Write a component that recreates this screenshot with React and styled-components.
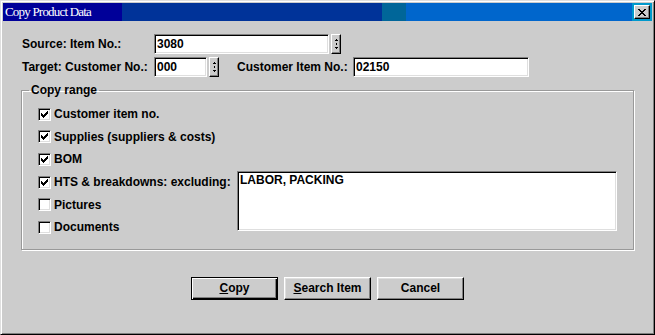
import React from 'react';
import styled, { createGlobalStyle } from 'styled-components';

const GlobalStyle = createGlobalStyle`
    html, body {
        margin: 0;
        padding: 0;
        background: #cccccc;
    }
    body {
        font-family: "Liberation Sans", Arial, sans-serif;
    }
`

const Window = styled.div`
    box-sizing: border-box;
    width: 655px;
    height: 335px;
    display: flex;
    flex-direction: column;
    background: #cccccc;
    border: 1px solid;
    border-color: #dfdfdf #000000 #000000 #dfdfdf;
    box-shadow: inset 1px 1px #ffffff, inset -1px -1px #808080;
    padding: 2px;
`
const TitleBar = styled.div`
    height: 18px;
    flex: none;
    display: flex;
    align-items: center;
    justify-content: space-between;
    padding: 0 2px;
    background: linear-gradient(to right,
        #000099 0 119px,
        #003399 119px 379px,
        #006699 379px 403px,
        #0066cc 403px 629px,
        #0099cc 629px);
`
const Title = styled.span`
    font-family: "Liberation Serif", "Times New Roman", serif;
    font-size: 13px;
    letter-spacing: -0.8px;
    color: #ffffff;
    line-height: 18px;
`
const CloseButton = styled.div`
    box-sizing: border-box;
    width: 16px;
    height: 14px;
    display: flex;
    align-items: center;
    justify-content: center;
    background: #cccccc;
    border: 1px solid;
    border-color: #ffffff #000000 #000000 #ffffff;
    box-shadow: inset -1px -1px #808080;
`
const Body = styled.div`
    flex: 1;
    display: flex;
    flex-direction: column;
    padding: 13px 18px 0 18px;
`
const Fields = styled.div`
    display: flex;
    flex-direction: column;
    gap: 3px;
    padding-left: 1px;
`
const FieldRow = styled.div`
    display: flex;
    align-items: center;
    height: 20px;
`
const FieldLabel = styled.span`
    width: ${p => p.$width}px;
    margin-left: ${p => p.$offset || 0}px;
    flex: none;
    font-size: 12px;
    font-weight: bold;
    white-space: nowrap;
`
const TextInput = styled.input`
    box-sizing: border-box;
    width: ${p => p.$width}px;
    height: 20px;
    margin: 0;
    padding: 0 2px;
    border: 1px solid;
    border-color: #808080 #ffffff #ffffff #808080;
    box-shadow: inset 1px 1px #000000, inset -1px -1px #dfdfdf;
    background: #ffffff;
    font-family: "Liberation Sans", Arial, sans-serif;
    font-size: 12px;
    font-weight: bold;
    color: #000000;
    outline: none;
`
const Spinner = styled.div`
    box-sizing: border-box;
    width: 10px;
    height: 20px;
    margin-left: 2px;
    display: flex;
    align-items: center;
    justify-content: center;
    background: #cccccc;
    border: 1px solid;
    border-color: #ffffff #000000 #000000 #ffffff;
    box-shadow: inset -1px -1px #808080;
`
const GroupBox = styled.fieldset`
    margin: 6px 0 0 0;
    padding: 0;
    min-inline-size: 0;
    border: 1px solid #999999;
    box-shadow: inset 1px 1px #ffffff, 1px 1px #ffffff;
`
const Legend = styled.legend`
    margin-left: 7px;
    padding: 0 2px;
    font-size: 12px;
    font-weight: bold;
    line-height: 14px;
`
const Options = styled.div`
    display: grid;
    grid-template-columns: 199px 380px;
    grid-auto-rows: 22.6px;
    align-items: center;
    padding: 6px 0 10px 16px;
`
const CheckRow = styled.label`
    grid-column: 1;
    display: flex;
    align-items: center;
    gap: 3px;
    font-size: 12px;
    font-weight: bold;
    white-space: nowrap;
`
const CheckBox = styled.span`
    box-sizing: border-box;
    width: 13px;
    height: 13px;
    flex: none;
    display: flex;
    align-items: center;
    justify-content: center;
    background: #ffffff;
    border: 1px solid;
    border-color: #808080 #ffffff #ffffff #808080;
    box-shadow: inset 1px 1px #000000, inset -1px -1px #dfdfdf;
`
const Exclusions = styled.textarea`
    grid-column: 2;
    grid-row: 4 / span 3;
    align-self: start;
    box-sizing: border-box;
    width: 380px;
    height: 60px;
    margin: 0;
    padding: 1px 2px;
    resize: none;
    border: 1px solid;
    border-color: #808080 #ffffff #ffffff #808080;
    box-shadow: inset 1px 1px #000000, inset -1px -1px #dfdfdf;
    background: #ffffff;
    font-family: "Liberation Sans", Arial, sans-serif;
    font-size: 12px;
    font-weight: bold;
    line-height: 14px;
    color: #000000;
    outline: none;
    overflow: hidden;
`
const ButtonBar = styled.div`
    display: flex;
    justify-content: center;
    gap: 6px;
    margin-top: 27px;
`
const Button = styled.button`
    box-sizing: border-box;
    width: 87px;
    height: 23px;
    margin: 0;
    padding: 0;
    background: #cccccc;
    border: 1px solid;
    border-color: ${p => p.$default ? '#000000' : '#ffffff #000000 #000000 #ffffff'};
    box-shadow: ${p => p.$default
        ? 'inset 1px 1px #ffffff, inset -1px -1px #000000, inset -2px -2px #808080'
        : 'inset -1px -1px #808080, inset 1px 1px #dfdfdf'};
    font-family: "Liberation Sans", Arial, sans-serif;
    font-size: 12px;
    font-weight: bold;
    color: #000000;
    cursor: pointer;
    &:focus {
        outline: none;
    }
`

function CloseGlyph() {
    return (
        <svg width="8" height="7" viewBox="0 0 8 7">
            <path d="M0 0h2v1h1v1h2V1h1V0h2v1H7v1H6v1H5v1h1v1h1v1h1v1H6V6H5V5H3v1H2v1H0V6h1V5h1V4h1V3H2V2H1V1H0z" fill="#000" />
        </svg>
    )
}

function SpinGlyph() {
    return (
        <svg width="5" height="14" viewBox="0 0 5 14">
            <path d="M2 2h1v1h1v1H1V3h1z" fill="#000" />
            <rect x="2" y="6" width="1" height="2" fill="#000" />
            <path d="M1 10h3v1H3v1H2v-1H1z" fill="#000" />
        </svg>
    )
}

function Check({ checked }) {
    return (
        <CheckBox>
            {checked && (
                <svg width="7" height="7" viewBox="0 0 7 7">
                    <path d="M6 0h1v3H6v1H5v1H4v1H3v1H2V6H1V5H0V2h1v1h1v1h1V3h1V2h1V1h1z" fill="#000" />
                </svg>
            )}
        </CheckBox>
    )
}

const options = [
    { label: 'Customer item no.', checked: true },
    { label: 'Supplies (suppliers & costs)', checked: true },
    { label: 'BOM', checked: true },
    { label: 'HTS & breakdowns: excluding:', checked: true },
    { label: 'Pictures', checked: false },
    { label: 'Documents', checked: false },
];

export default function App() {
    return (
        <>
            <GlobalStyle />
            <Window>
                <TitleBar>
                    <Title>Copy Product Data</Title>
                    <CloseButton><CloseGlyph /></CloseButton>
                </TitleBar>
                <Body>
                    <Fields>
                        <FieldRow>
                            <FieldLabel $width={132}>Source: Item No.:</FieldLabel>
                            <TextInput $width={175} value="3080" readOnly />
                            <Spinner><SpinGlyph /></Spinner>
                        </FieldRow>
                        <FieldRow>
                            <FieldLabel $width={132}>Target: Customer No.:</FieldLabel>
                            <TextInput $width={53} value="000" readOnly />
                            <Spinner><SpinGlyph /></Spinner>
                            <FieldLabel $width={116} $offset={18}>Customer Item No.:</FieldLabel>
                            <TextInput $width={176} value="02150" readOnly />
                        </FieldRow>
                    </Fields>
                    <GroupBox>
                        <Legend>Copy range</Legend>
                        <Options>
                            {options.map(o => (
                                <CheckRow key={o.label}>
                                    <Check checked={o.checked} />
                                    {o.label}
                                </CheckRow>
                            ))}
                            <Exclusions value="LABOR, PACKING" readOnly />
                        </Options>
                    </GroupBox>
                    <ButtonBar>
                        <Button $default><u>C</u>opy</Button>
                        <Button><u>S</u>earch Item</Button>
                        <Button>Cancel</Button>
                    </ButtonBar>
                </Body>
            </Window>
        </>
    )
}
